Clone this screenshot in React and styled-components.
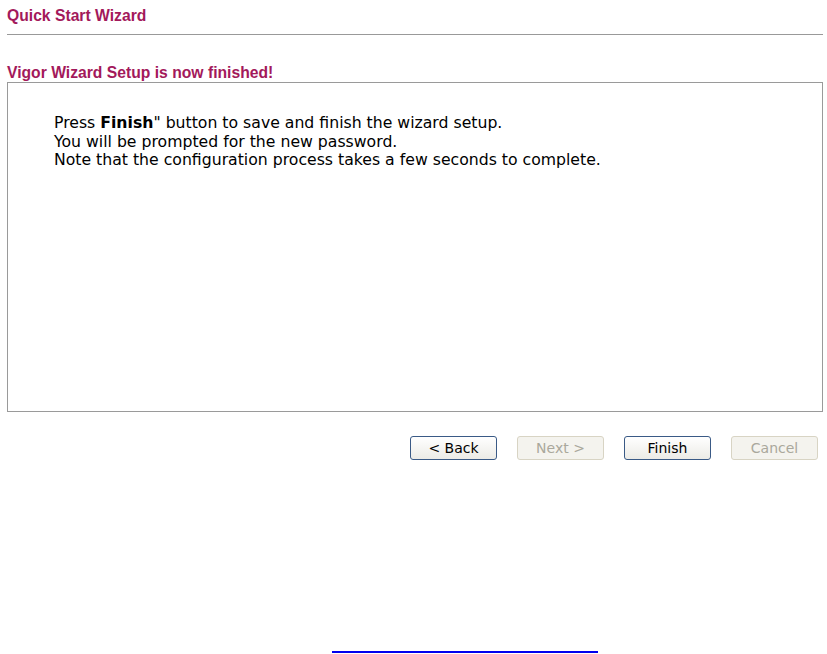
import React from 'react';
import styled, {createGlobalStyle} from 'styled-components';

const Global = createGlobalStyle`
  html, body {
    margin: 0;
    padding: 0;
    background: #ffffff;
  }
`;

const Page = styled.div`
  width: 827px;
  height: 654px;
  box-sizing: border-box;
  padding: 0 4px 0 7px;
  display: flex;
  flex-direction: column;
  overflow: hidden;
  font-family: "DejaVu Sans", Verdana, sans-serif;
`;

const Title = styled.div`
  font-family: "Liberation Sans", Arial, sans-serif;
  font-weight: bold;
  font-size: 15.7px;
  line-height: 18px;
  color: #a3195b;
  padding-top: 7px;
  height: 35px;
  box-sizing: border-box;
  border-bottom: 1px solid #999999;
`;

const Heading = styled(Title)`
  border-bottom: none;
  margin-top: 29px;
  padding-top: 0;
  height: 18px;
`;

const Panel = styled.div`
  height: 330px;
  box-sizing: border-box;
  border: 1px solid #9a9a9a;
  padding: 31px 0 0 46px;
  font-size: 15.7px;
  line-height: 18.5px;
  color: #000000;
`;

const Buttons = styled.div`
  display: flex;
  justify-content: flex-end;
  gap: 20px;
  margin-top: 24px;
  padding-right: 5px;
`;

const Button = styled.button`
  width: 87px;
  height: 24px;
  box-sizing: border-box;
  border-radius: 3px;
  font-family: "DejaVu Sans", Verdana, sans-serif;
  font-size: 14px;
  padding: 0;
  background: ${p => (p.disabled ? '#f4f3ee' : 'linear-gradient(#ffffff, #ecebe6)')};
  border: 1px solid ${p => (p.disabled ? '#d8d4c4' : '#3a5a86')};
  color: ${p => (p.disabled ? '#aaa89c' : '#000000')};
`;

const Footer = styled.div`
  flex: 1;
  display: flex;
  justify-content: flex-start;
  align-items: flex-end;
  padding-left: 325px;
`;

const Link = styled.a`
  display: block;
  width: 266px;
  height: 2px;
  margin-bottom: 1px;
  background: #0000ee;
`;

export default function App() {
  return (
    <Page>
      <Global />
      <Title>Quick Start Wizard</Title>
      <Heading>Vigor Wizard Setup is now finished!</Heading>
      <Panel>
        Press <b>Finish</b>" button to save and finish the wizard setup.<br />
        You will be prompted for the new password.<br />
        Note that the configuration process takes a few seconds to complete.
      </Panel>
      <Buttons>
        <Button>&lt; Back</Button>
        <Button disabled>Next &gt;</Button>
        <Button>Finish</Button>
        <Button disabled>Cancel</Button>
      </Buttons>
      <Footer>
        <Link href="#" />
      </Footer>
    </Page>
  );
}
